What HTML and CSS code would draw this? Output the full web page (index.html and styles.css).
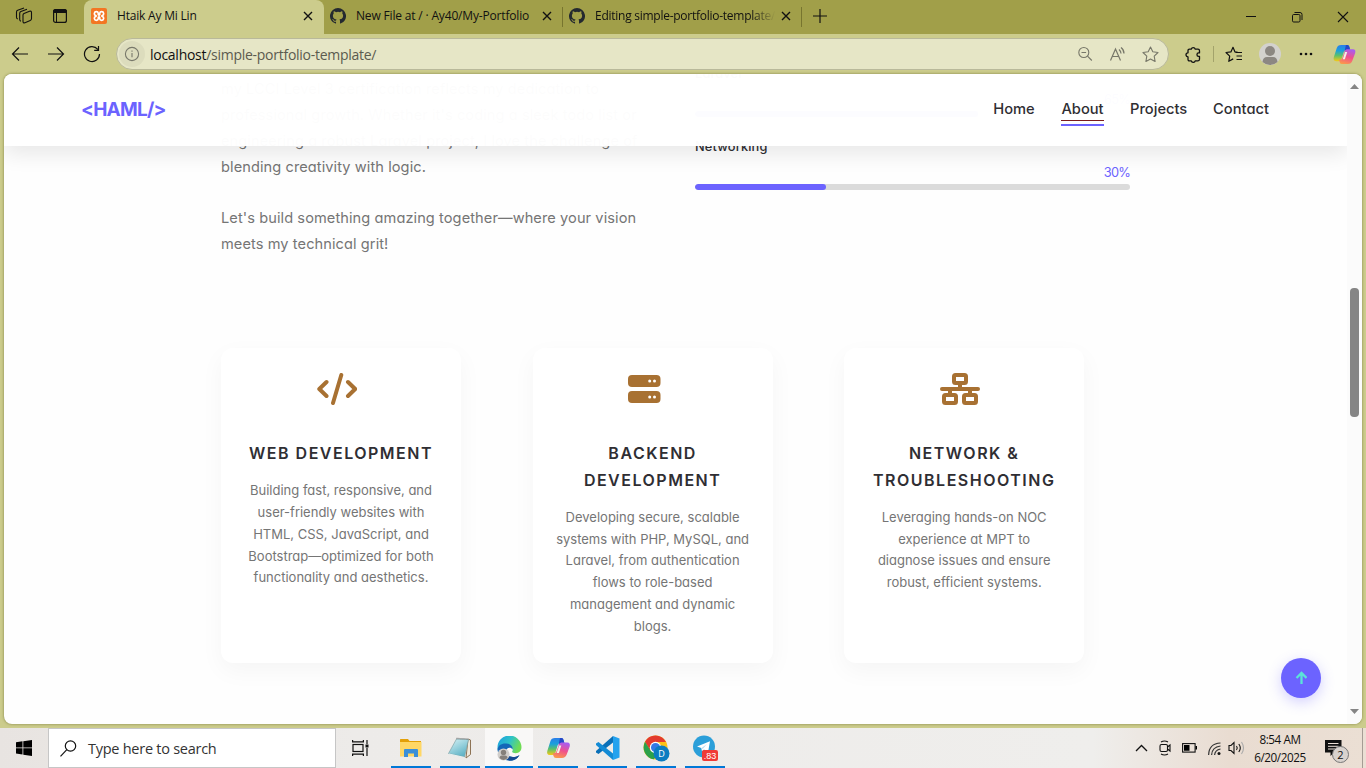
FILE: index.html
```html
<!DOCTYPE html>
<html lang="en">
<head>
<meta charset="utf-8">
<title>Htaik Ay Mi Lin</title>
<link rel="stylesheet" href="styles.css">
</head>
<body>
<svg class="defs" width="0" height="0">
  <defs>
    <linearGradient id="cpA" x1="0" y1="0" x2="0" y2="1"><stop offset="0" stop-color="#2b7de9"/><stop offset=".35" stop-color="#1aa0dc"/><stop offset=".65" stop-color="#5cc06a"/><stop offset="1" stop-color="#f6c915"/></linearGradient>
    <linearGradient id="cpB" x1=".6" y1="0" x2=".3" y2="1"><stop offset="0" stop-color="#a85cf0"/><stop offset=".5" stop-color="#f0508c"/><stop offset="1" stop-color="#fb9a4a"/></linearGradient>
    <linearGradient id="edA" x1="0" y1="0" x2="1" y2=".4"><stop offset="0" stop-color="#1b9de2"/><stop offset=".55" stop-color="#2fc3c8"/><stop offset="1" stop-color="#6fdc55"/></linearGradient>
    <linearGradient id="npA" x1="0" y1="0" x2=".6" y2="1"><stop offset="0" stop-color="#d9f3f6"/><stop offset="1" stop-color="#5fb3c6"/></linearGradient>
    <symbol id="close" viewBox="0 0 10 10"><path d="M1 1l8 8M9 1l-8 8" stroke="#111" stroke-width="1.4" fill="none"/></symbol>
    <symbol id="github" viewBox="0 0 16 16"><path fill="#24292f" d="M8 0a8 8 0 0 0-2.53 15.59c.4.07.55-.17.55-.38v-1.49c-2.23.49-2.7-.94-2.7-.94-.36-.93-.89-1.17-.89-1.17-.72-.5.06-.49.06-.49.8.06 1.22.83 1.22.83.72 1.22 1.88.87 2.34.66.07-.52.28-.87.5-1.07-1.77-.2-3.64-.89-3.64-3.95 0-.87.31-1.59.82-2.15-.08-.2-.35-1.01.08-2.12 0 0 .67-.21 2.2.82a7.6 7.6 0 0 1 4 0c1.52-1.03 2.19-.82 2.19-.82.44 1.11.16 1.92.08 2.12.51.56.82 1.28.82 2.15 0 3.07-1.87 3.75-3.65 3.95.29.24.54.73.54 1.48v2.19c0 .21.14.46.55.38A8 8 0 0 0 8 0z"/></symbol>
    <symbol id="copilot" viewBox="0 0 24 22">
      <path d="M8.500 1h6.200q1.800 0 2.300 2l.8 3h-3.500c-1.800 0-2.600.8-3.200 2.600L9 15.500c-.5 1.500-1.500 2.500-3.200 2.500H3.200C.8 18 .2 16.200.8 14L3.900 4.200C4.600 2.200 6 1 8.500 1z" fill="url(#cpA)"/>
      <path d="M13.500 1h1.800q1.400 0 1.800 2l.9 3.500h-3c-1.500 0-2.500.3-3.200 2.200z" fill="#2448c8"/>
      <path d="M15.500 21H9.300q-1.800 0-2.300-2l-.8-2.500c1.800 0 3.300-.3 4-2.700L12.600 7c.5-1.100 1.600-1.600 3.200-1.600h5c2.400 0 3 1.800 2.400 4l-3.100 8.400c-.7 2-2.100 3.200-4.600 3.200z" fill="url(#cpB)"/>
      <path d="M12.600 8.500h2.200l-2.400 7.500h-2.200z" fill="#f4f1e6"/>
    </symbol>
  </defs>
</svg>

<div class="desktop">
  <header class="tabstrip">
    <div class="strip-tools">
      <span class="strip-icon"><svg width="18" height="18" viewBox="0 0 18 18" fill="none" stroke="#111" stroke-width="1.1" stroke-linejoin="round"><path d="M9 6.500 14.500 4.300q2-.6 2 1.300v6q0 1.500-1.300 2L10 15.700q-2 .6-2-1.300V8q0-1 1-1.500z"/><path d="M6 14.200Q4.700 14 4.700 12.500V6.300q0-1.200 1.200-1.700L12 2.300M2.800 12Q1.500 11.700 1.500 10.300V5q0-1.200 1.200-1.700L9 .9"/></svg></span>
      <span class="strip-icon"><svg width="16" height="16" viewBox="0 0 16 16"><rect x="1.600" y="1.600" width="12.800" height="12.800" rx="2" fill="none" stroke="#111" stroke-width="1.200"/><path d="M1 5V3.500Q1 1 3.500 1h9Q15 1 15 3.500V5z" fill="#111"/><path d="M4.500 5v9" stroke="#111"/></svg></span>
    </div>
    <div class="tab active">
      <svg class="favicon" viewBox="0 0 16 16"><rect width="16" height="16" rx="2" fill="#f37623"/><path d="M5.300 3.700a2 2 0 0 0-.6 3.900q1 .4 0 .8a2 2 0 1 0 2.600 2.200V9.200q.7-.8 1.400 0v1.400a2 2 0 1 0 2.600-2.200q-1-.4 0-.8a2 2 0 1 0-2.600-2.200v1.400q-.7.8-1.400 0V5.400a2 2 0 0 0-2-1.700z" fill="none" stroke="#fff" stroke-width="1.700" stroke-linejoin="round"/></svg>
      <span class="tab-title t1">Htaik Ay Mi Lin</span>
      <svg class="close"><use href="#close"/></svg>
    </div>
    <div class="tab sep">
      <svg class="favicon"><use href="#github"/></svg>
      <span class="tab-title t2">New File at / · Ay40/My-Portfolio</span>
      <svg class="close"><use href="#close"/></svg>
    </div>
    <div class="tab sep">
      <svg class="favicon"><use href="#github"/></svg>
      <span class="tab-title t3">Editing simple-portfolio-template/</span>
      <svg class="close"><use href="#close"/></svg>
    </div>
    <span class="new-tab"><svg width="14" height="14" viewBox="0 0 14 14"><path d="M7 0v14M0 7h14" stroke="#111" stroke-width="1.200"/></svg></span>
    <div class="window-buttons">
      <span><svg width="12" height="12" viewBox="0 0 12 12"><path d="M1 5.500h10" stroke="#111"/></svg></span>
      <span><svg width="12" height="12" viewBox="0 0 12 12" fill="none" stroke="#111"><rect x="1.500" y="3.500" width="7.500" height="7.500" rx="1.200"/><path d="M3.500 1.500H9q2 0 2 2V9"/></svg></span>
      <span><svg width="12" height="12" viewBox="0 0 12 12"><path d="M1 1l10 10M11 1L1 11" stroke="#111" stroke-width="1.100"/></svg></span>
    </div>
  </header>

  <div class="toolbar">
    <div class="nav-tools">
      <span class="cell"><svg width="18" height="16" viewBox="0 0 18 16" fill="none" stroke="#111" stroke-width="1.200"><path d="M17 8H1.500M8 1.500 1.500 8 8 14.500"/></svg></span>
      <span class="cell"><svg width="18" height="16" viewBox="0 0 18 16" fill="none" stroke="#111" stroke-width="1.200"><path d="M1 8h15.500M10 1.500 16.500 8 10 14.500"/></svg></span>
      <span class="cell"><svg width="18" height="18" viewBox="0 0 18 18" fill="none" stroke="#111" stroke-width="1.200"><path d="M16.500 9A7.500 7.500 0 1 1 14.800 4.300M15.500 1v4.300h-4.300"/></svg></span>
    </div>
    <div class="address">
      <span class="info"><svg width="16" height="16" viewBox="0 0 16 16" fill="none" stroke="#77776a" stroke-width="1.100"><circle cx="8" cy="8" r="6.600"/><path d="M8 7v4.200M8 4.500v1.300"/></svg></span>
      <span class="url">localhost<i>/simple-portfolio-template/</i></span>
      <div class="address-tools">
        <svg width="16" height="16" viewBox="0 0 16 16" fill="none" stroke="#777769" stroke-width="1.100"><circle cx="6.800" cy="6.500" r="5"/><path d="M4.500 6.500h4.600M10.500 10.200l4.300 4.300"/></svg>
        <svg width="17" height="16" viewBox="0 0 17 16" fill="none" stroke="#777769" stroke-width="1.200"><path d="M1.500 14.500 6.500 3l5 11.500M3.200 10.500h6.600M10 3.500q2 1.700 2 4M12 1.500q3 2.300 3 6"/></svg>
        <svg width="17" height="17" viewBox="0 0 17 17" fill="none" stroke="#777769" stroke-width="1.100" stroke-linejoin="round"><path d="M8.500 1l2.300 4.800 5.200.7-3.800 3.700.9 5.300-4.600-2.500-4.600 2.500.9-5.300L1 6.500l5.200-.7z"/></svg>
      </div>
    </div>
    <div class="side-tools">
      <span class="cell"><svg width="16" height="17" viewBox="0 0 16 17" fill="none" stroke="#111" stroke-width="1.300" stroke-linejoin="round"><path d="M4.500 3.200h1.800a2 2 0 0 1 3.900 0h2.800q1.500 0 1.500 1.500v2.200h-.8a1.700 1.700 0 0 0 0 3.500h.8v2.900q0 1.500-1.500 1.500h-2.800a2 2 0 0 1-3.900 0H4.500Q3 14.800 3 13.300v-2.500a2 2 0 0 1 0-4V4.700q0-1.500 1.500-1.500z"/></svg></span>
      <span class="divider"></span>
      <span class="cell"><svg width="18" height="17" viewBox="0 0 18 17" fill="none" stroke="#111" stroke-width="1.200" stroke-linejoin="round"><path d="M12.500 6H10L8 1.300 5.900 5.900 1 6.500l3.700 3.600-.9 5.200 4.400-2.400M10.500 6.500H17M11.500 10H17M11.500 13.500H17"/></svg></span>
      <span class="cell"><svg width="22" height="22" viewBox="0 0 22 22"><circle cx="11" cy="11" r="11" fill="#d3d1ce"/><circle cx="11" cy="8" r="5" fill="#8c8782"/><path d="M3.500 19Q4 14 8 14h6q4 0 4.500 5A11 11 0 0 1 3.500 19z" fill="#8c8782"/></svg></span>
      <span class="cell"><svg width="14" height="4" viewBox="0 0 14 4" fill="#111"><circle cx="2" cy="2" r="1.300"/><circle cx="7" cy="2" r="1.300"/><circle cx="12" cy="2" r="1.300"/></svg></span>
      <span class="cell last"><svg width="23" height="21"><use href="#copilot"/></svg></span>
    </div>
  </div>

  <div class="frame">
    <div class="viewport">
      <main class="page">
        <nav class="navbar">
          <a class="brand">&lt;HAML/&gt;</a>
          <div class="menu">
            <a class="m-home">Home</a>
            <a class="m-about current">About</a>
            <a class="m-projects">Projects</a>
            <a class="m-contact">Contact</a>
          </div>
        </nav>
        <section class="about">
          <div class="bio">
            <p>my LCCI Level 3 certification reflects my dedication to<br>professional growth. Whether it's coding a sleek todo list or<br>engineering a robust Laravel project, I love the challenge of<br>blending creativity with logic.</p>
            <p>Let's build something amazing together—where your vision<br>meets my technical grit!</p>
          </div>
          <div class="skills">
            <div class="skill"><span class="skill-name">Laravel</span><span class="skill-value">65%</span><div class="track"><div class="fill" style="width:65%"></div></div></div>
            <div class="skill"><span class="skill-name">Networking</span><span class="skill-value">30%</span><div class="track"><div class="fill" style="width:30%"></div></div></div>
          </div>
        </section>
        <section class="services">
          <article class="card">
            <svg class="card-icon" width="40" height="32" viewBox="0 0 40 32" fill="none" stroke="#a87132" stroke-width="4" stroke-linecap="round" stroke-linejoin="round"><path d="M9.500 9 2.300 16l7.200 7M24.300 2l-8.300 28M31 9l7.200 7L31 23"/></svg>
            <h3>WEB DEVELOPMENT</h3>
            <p>Building fast, responsive, and<br>user-friendly websites with<br>HTML, CSS, JavaScript, and<br>Bootstrap—optimized for both<br>functionality and aesthetics.</p>
          </article>
          <article class="card">
            <svg class="card-icon server" width="40" height="32" viewBox="0 0 40 32"><g fill="#a87132"><rect y="2" width="32.500" height="12" rx="4"/><rect y="18" width="32.500" height="12" rx="4"/></g><g fill="#fff"><circle cx="21.700" cy="8" r="1.500"/><circle cx="26.500" cy="8" r="1.500"/><circle cx="21.700" cy="24" r="1.500"/><circle cx="26.500" cy="24" r="1.500"/></g></svg>
            <h3>BACKEND<br>DEVELOPMENT</h3>
            <p>Developing secure, scalable<br>systems with PHP, MySQL, and<br>Laravel, from authentication<br>flows to role-based<br>management and dynamic<br>blogs.</p>
          </article>
          <article class="card">
            <svg class="card-icon" width="40" height="32" viewBox="0 0 40 32" fill="none" stroke="#a87132" stroke-width="4"><rect x="14" y="2" width="12" height="8" rx="1.500"/><rect x="4" y="22" width="12" height="8" rx="1.500"/><rect x="24" y="22" width="12" height="8" rx="1.500"/><path d="M20 11v5M10 16v5M30 16v5"/><path d="M2 16h36" stroke-linecap="round"/></svg>
            <h3>NETWORK &amp;<br>TROUBLESHOOTING</h3>
            <p>Leveraging hands-on NOC<br>experience at MPT to<br>diagnose issues and ensure<br>robust, efficient systems.</p>
          </article>
        </section>
        <a class="to-top"><svg width="12" height="14" viewBox="0 0 12 14" fill="none" stroke="#5be3d8" stroke-width="2.300"><path d="M6.500 13V2M1.500 7l5-5 5 5"/></svg></a>
      </main>
      <div class="scrollbar">
        <svg width="9" height="5" viewBox="0 0 9 5"><path d="M0 5 4.500 0 9 5z" fill="#858585"/></svg>
        <div class="thumb"></div>
        <svg width="9" height="5" viewBox="0 0 9 5"><path d="M0 0h9L4.500 5z" fill="#858585"/></svg>
      </div>
    </div>
  </div>

  <footer class="taskbar">
    <span class="start"><svg width="16" height="16" viewBox="0 0 16 16"><path d="M0 2.200 6.500 1.300V7.500H0zM7.300 1.200 16 0V7.500H7.300zM0 8.300h6.500v6.200L0 13.600zM7.300 8.300H16V16l-8.700-1.300z"/></svg></span>
    <div class="search"><svg width="17" height="17" viewBox="0 0 17 17" fill="none" stroke="#111" stroke-width="1.200"><circle cx="10.500" cy="6" r="5.200"/><path d="M6.800 9.700.5 16.300"/></svg><span>Type here to search</span></div>
    <span class="task-view"><svg width="17" height="16" viewBox="0 0 17 16" fill="none" stroke="#111" stroke-width="1.200"><rect x="1" y="4.500" width="10" height="7"/><path d="M.6 0v1.800h10.800V0M.6 16v-1.800h10.800V16M15 0v4M15 8v8"/><path d="M13.500 6h3" stroke-width="3"/></svg></span>
    <div class="apps">
      <span class="app"><svg width="22" height="20" viewBox="0 0 22 20"><path d="M0 1.500Q0 1 .8 1H8l1.500 2H21v15H0z" fill="#e3a008"/><path d="M0 4h21.500v14.500H0z" fill="#ffd765"/><path d="M4 18.500V12q0-1 1-1h12q1 0 1 1v7h-4v-3.500H8V19H4z" fill="#3b8fd8"/></svg></span>
      <span class="app"><svg width="24" height="22" viewBox="0 0 24 22"><path d="M20 2l2.500 1v14.500L18 21z" fill="#efe9dc" stroke="#8d7355"/><path d="M8.500 2 20.500 2.500 16.500 20 .5 16.500z" fill="url(#npA)" stroke="#7fa3a8" stroke-width=".7"/><path d="M8.500 1.500 20.500 2" stroke="#777" stroke-dasharray="1 1" stroke-width="1.500"/><path d="M1 17 16.500 20.500" stroke="#e8f2f2"/></svg></span>
      <span class="app selected"><svg width="25" height="25" viewBox="0 0 25 25"><path d="M.5 12A12 12 0 0 1 24.500 11c0 4-2.500 6.200-5.700 6.200-2.800 0-4.400-1.200-3.300-2.500 1-2-.5-5-4-5C6 9.700 1 12 .5 14z" fill="url(#edA)"/><path d="M.5 14C.8 9 5 7 9.500 7.500c4 .2 6.700 3 6.200 6-2-3-6.700-2-6.700 2 0 5 6.500 7.500 13.500 3.700A12 12 0 0 1 .5 14z" fill="#1467b8"/><path d="M9 15.500c0 5 6.500 7.500 13.500 3.700C19 24.500 14 25 10.500 24 7 22 7 17 9 15.500z" fill="#164a90"/><circle cx="6.500" cy="18.500" r="6" fill="#d0cecb"/><circle cx="6.500" cy="16.500" r="2.700" fill="#85807b"/><path d="M2.500 22q0-2.500 2.500-2.500h3q2.500 0 2.500 2.500-4 4-8 0z" fill="#85807b"/></svg></span>
      <span class="app"><svg width="25" height="22"><use href="#copilot"/></svg></span>
      <span class="app"><svg width="25" height="24" viewBox="0 0 25 24"><path d="M18 0l6.500 2.500v19L18 24z" fill="#24a2ee"/><path d="M18 0v6.500L3.500 18 1 16.500V15z" fill="#0a70b8"/><path d="M18 24v-6.500L3.500 6 1 7.500V9z" fill="#138bd5"/></svg></span>
      <span class="app"><svg width="27" height="27" viewBox="0 0 27 27"><circle cx="12.500" cy="12.500" r="12" fill="#fbc116"/><path d="M12.500.5A12 12 0 0 1 23 7H12.500L7.300 15.500 2 6.800A12 12 0 0 1 12.500.5z" fill="#e33b2e"/><path d="M2 6.800 7.500 15.500l7.500 2.800-4.200 6A12 12 0 0 1 2 6.800z" fill="#2ba14b"/><circle cx="12.500" cy="12.500" r="5.700" fill="#fff"/><circle cx="12.500" cy="12.500" r="4.500" fill="#3578e5"/><circle cx="18.500" cy="18.500" r="8" fill="#0b7cc1"/><text x="18.500" y="22" text-anchor="middle" class="chrome-letter">D</text></svg></span>
      <span class="app"><svg width="25" height="26" viewBox="0 0 25 26"><circle cx="11" cy="11.500" r="11" fill="#2b9fd9"/><path d="M4 11.500 17 6.300 15 17.500l-4-3-2 2-.7-3.500z" fill="#fff"/><path d="M8.500 13 14 9l-4.300 5z" fill="#bcdcf0"/><rect x="9" y="15" width="16" height="11" rx="2" fill="#f03a37"/><text x="17" y="24" text-anchor="middle" class="badge-text">.83</text></svg></span>
    </div>
    <div class="tray">
      <svg class="chev" width="13" height="8" viewBox="0 0 13 8"><path d="M1 7l5.500-5.500L12 7" fill="none" stroke="#111" stroke-width="1.300"/></svg>
      <svg class="cam" width="12" height="16" viewBox="0 0 12 16" fill="none" stroke="#111" stroke-width="1.100"><rect x="1" y="4.500" width="7.500" height="7" rx="1.500"/><path d="M8.500 7l2.500-2v6L8.500 9M2 2q3.500-2 7 0M2 14q3.500 2 7 0"/></svg>
      <svg class="bat" width="15" height="10" viewBox="0 0 15 10"><rect x=".6" y=".6" width="12.500" height="8.500" fill="none" stroke="#111" stroke-width="1.100"/><path d="M2 2h5.500v5.700H2zM13.500 3H15v3.500h-1.500z"/></svg>
      <svg class="wifi" width="13" height="13" viewBox="0 0 13 13" fill="none" stroke="#333" stroke-width="1.200"><path d="M.6 13Q1 1.500 12.500 1M3.600 13Q4 5 12.500 4M6.600 13Q7 8 12.500 7"/><circle cx="11" cy="11.500" r="1.500" fill="#111" stroke="none"/></svg>
      <svg class="vol" width="17" height="14" viewBox="0 0 17 14" fill="none" stroke="#111" stroke-width="1.100"><path d="M1 4.500h2L6 1.500v11l-3-3H1zM8.500 5q1.500 2 0 4M10.800 3q3 4 0 8"/><path d="M13.500 1q4 6 0 12" stroke="#aaa"/></svg>
      <div class="clock"><span>8:54 AM</span><span>6/20/2025</span></div>
      <div class="notice"><svg width="17" height="16" viewBox="0 0 17 16"><path d="M0 0h16.500v12.500H9L5.500 16v-3.500H0z" fill="#111"/><path d="M3 3.500h10.500M3 6.300h10.500M3 9h7" stroke="#eadfd6"/></svg><b>2</b></div>
    </div>
  </footer>
</div>
</body>
</html>
```
FILE: styles.css
```css
* { box-sizing: border-box; }
body { margin: 0; overflow: hidden; font-family: "Open Sans", "Noto Sans", sans-serif; color: #111; }
svg { display: block; flex: none; }
.defs { position: absolute; }
.desktop { width: 1366px; height: 768px; display: flex; flex-direction: column; background: #cccc8c; }

/* tab strip */
.tabstrip { height: 34px; display: flex; background: #a19f49; }
.strip-tools { display: flex; width: 84px; padding: 0 0 2px 6px; align-items: center; }
.strip-icon { width: 36px; display: flex; justify-content: center; }
.tab { width: 239px; padding: 0 9px 2px 7px; display: flex; align-items: center; }
.tab.active { width: 240px; background: #cccc8c; border-radius: 8px 8px 0 0; }
.tab.sep { background: linear-gradient(#77752f, #77752f) right 7px / 1px 20px no-repeat; }
.favicon { width: 16px; height: 16px; margin-right: 10px; }
.tab.sep .favicon { margin: 0 10px 0 -1px; }
.tab-title { flex: 1; font-size: 12px; line-height: 18px; white-space: nowrap; overflow: hidden; }
.t1 { letter-spacing: -.2px; }
.t2 { letter-spacing: -.17px; }
.t3 { letter-spacing: -.26px; -webkit-mask-image: linear-gradient(90deg, #000 86%, transparent 99%); mask-image: linear-gradient(90deg, #000 86%, transparent 99%); }
.close { width: 10px; height: 10px; margin: 0 2px 0 4px; }
.new-tab { padding: 9px 0 0 11px; }
.window-buttons { display: flex; margin-left: auto; }
.window-buttons span { width: 46px; height: 34px; display: flex; align-items: center; justify-content: center; }

/* toolbar */
.toolbar { height: 40px; display: flex; align-items: center; padding-left: 2px; }
.nav-tools { display: flex; width: 114px; }
.cell { width: 36px; height: 32px; display: flex; align-items: center; justify-content: center; }
.address { width: 1053px; height: 32px; border: 1px solid #b9b99a; border-radius: 16px; background: #e6e6c6; display: flex; align-items: center; padding: 0 9px 0 2px; }
.info { width: 26px; height: 26px; border-radius: 50%; background: #dcdcbd; display: flex; align-items: center; justify-content: center; }
.url { margin-left: 5px; font-size: 14px; letter-spacing: -.27px; white-space: nowrap; }
.url i { font-style: normal; color: #5b5b4f; }
.address-tools { margin-left: auto; display: flex; gap: 16px; align-items: center; }
.side-tools { display: flex; align-items: center; padding-left: 6px; }
.divider { width: 1px; height: 16px; background: #a3a36b; margin: 0 2px; }
.last { margin-left: 2px; }

/* browser viewport */
.frame { height: 654px; padding: 0 4px 4px; }
.viewport { height: 650px; display: flex; border-radius: 8px; overflow: hidden; background: #fefefe; box-shadow: 0 0 3px rgba(80, 80, 20, .6); }
.page { position: relative; width: 1343px; overflow: hidden; font-family: Inter, "Noto Sans", sans-serif; font-feature-settings: "cv11"; }
.navbar { position: absolute; inset: 0 0 auto; height: 72px; display: flex; justify-content: space-between; padding: 0 77px; background: rgba(255, 255, 255, .98); box-shadow: 0 8px 20px rgba(0, 0, 0, .09); z-index: 2; }
.brand { color: #6c63ff; font-weight: 700; font-size: 19px; line-height: 71px; letter-spacing: -.75px; }
.menu { display: flex; gap: 26px; font-size: 14.7px; font-weight: 450; color: #2f2e33; padding-top: 25px; }
.menu a { height: 27px; line-height: 20px; text-align: center; white-space: nowrap; }
.m-home { width: 42px; }
.m-about { width: 43px; }
.m-projects { width: 56px; }
.m-contact { width: 58px; }
.menu .current { background: linear-gradient(#7b1d1d, #7b1d1d) 0 21px / 100% 1px no-repeat; border-bottom: 2px solid #6c63ff; }

.about { height: 274px; display: flex; justify-content: space-between; padding: 0 217px; }
.bio { width: 425px; padding-top: 3px; font-size: 14.6px; line-height: 25.92px; letter-spacing: .08px; color: #757575; white-space: nowrap; }
.bio p { margin: 0 0 25px; }
.skills { width: 435px; }
.skill { height: 73px; margin-top: -10px; display: grid; grid-template-rows: 20px 27px 6px; font-size: 12.8px; }
.skill + .skill { margin-top: 0; }
.skill-name { font-weight: 450; color: #2f2e33; line-height: 20px; letter-spacing: .15px; }
.skill-value { color: #6c63ff; text-align: right; line-height: 32px; letter-spacing: -.8px; }
.track { height: 6px; border-radius: 3px; background: #dbdbdb; overflow: hidden; }
.fill { height: 100%; border-radius: 3px; background: #6c63ff; }

.services { display: flex; gap: 71.6px; padding-left: 217px; }
.card { width: 240px; height: 315px; border-radius: 12px; background: #fff; box-shadow: 0 8px 24px rgba(0, 0, 0, .04); padding-top: 25px; text-align: center; white-space: nowrap; }
.card-icon { margin-left: 96px; }
.card-icon.server { margin-left: 95px; }
.card h3 { margin: 35px 0 13.5px; font-size: 16px; line-height: 26.7px; font-weight: 600; letter-spacing: 1.5px; color: #2f2e33; }
.card p { margin: 0; font-size: 13px; line-height: 21.76px; color: #757575; }

.to-top { position: absolute; left: 1277px; top: 584px; width: 40px; height: 40px; border-radius: 50%; background: #6c63ff; display: flex; align-items: center; justify-content: center; box-shadow: 0 4px 14px rgba(108, 99, 255, .3); }
.scrollbar { width: 15px; background: #fbfbfb; display: flex; flex-direction: column; align-items: center; padding: 10px 0; }
.thumb { width: 9px; height: 129px; margin: 199px 0 auto; border-radius: 4px; background: #858585; }

/* taskbar */
.taskbar { height: 40px; display: flex; align-items: center; background: linear-gradient(90deg, #e8e4e1, #edebe9 26%, #efeeec 80%, #e9dcd1 90%, #ebdfd4); }
.start { width: 48px; display: flex; justify-content: center; }
.search { width: 288px; height: 40px; border: 1px solid #c6c6c6; background: #fff; display: flex; align-items: center; padding-left: 11px; gap: 11px; font-size: 14.5px; letter-spacing: -.26px; color: #333; }
.task-view { width: 55px; padding-left: 16px; }
.apps { display: flex; gap: 9px; }
.app { width: 40px; height: 40px; border-bottom: 2px solid #0078d7; display: flex; align-items: center; justify-content: center; padding-top: 2px; }
.app.selected { width: 48px; margin: 0 -4px; background: #f9f8f7; }
.chrome-letter { font: 9px "Open Sans", sans-serif; fill: #fff; }
.badge-text { font: 9px "Liberation Sans", sans-serif; fill: #fff; }
.tray { display: flex; align-items: center; margin-left: auto; height: 40px; width: 231px; }
.cam { margin-left: 11px; }
.bat { margin-left: 11px; }
.wifi { margin-left: 11px; }
.vol { margin-left: 7px; }
.clock { width: 70px; display: flex; flex-direction: column; align-items: center; font-size: 11.7px; line-height: 18px; letter-spacing: -.42px; padding-bottom: 1px; }
.notice { position: relative; margin-left: 10px; width: 38px; height: 40px; padding-top: 12px; border-right: 1px solid #a59c94; }
.notice b { position: absolute; left: 7px; top: 18px; width: 17px; height: 17px; border: 1px solid #777; border-radius: 50%; background: #d9d3ce; font-size: 11px; font-weight: 400; line-height: 15px; text-align: center; }
```
